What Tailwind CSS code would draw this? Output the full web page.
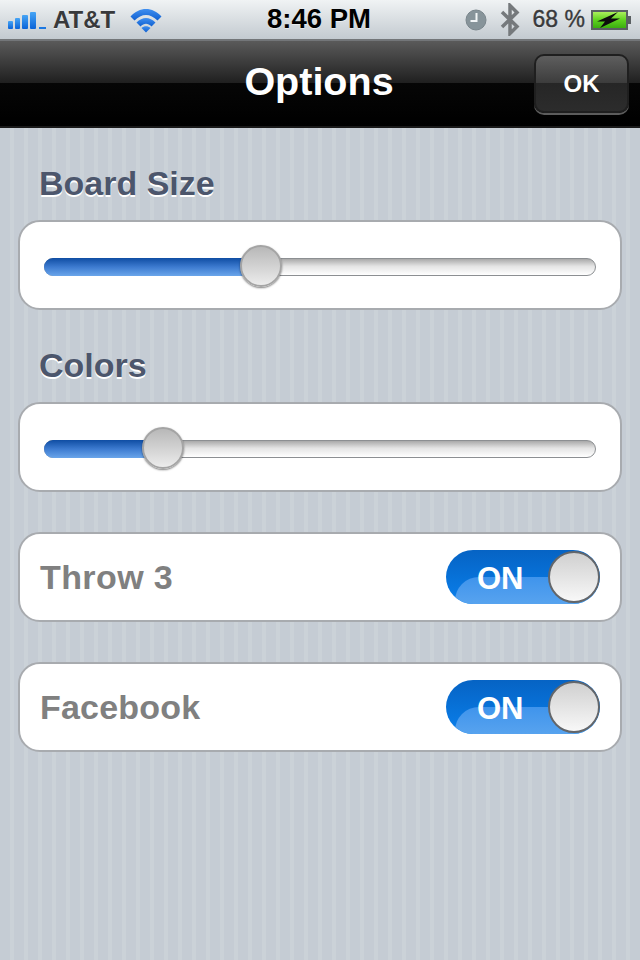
<!DOCTYPE html>
<html lang="en">

<head>
    <meta charset="UTF-8" />
    <title>Options</title>
    <script src="https://cdn.jsdelivr.net/npm/@tailwindcss/browser@4"></script>
</head>

<body class="w-[640px] h-[960px] overflow-hidden bg-[#c5ccd4] font-['Liberation_Sans',Arial,sans-serif]">

    <!-- status bar -->
    <div class="relative h-[39px] flex items-center pl-2 pr-2 bg-gradient-to-b from-[#f0f3f4] to-[#c3cad0] text-[#38393b] [text-shadow:0_1px_0_#ffffff99]">
        <svg width="38" height="18" viewBox="0 0 38 18" class="shrink-0">
            <defs>
                <linearGradient id="sig" x1="0" y1="0" x2="0" y2="1">
                    <stop offset="0" stop-color="#47a5f5" />
                    <stop offset="1" stop-color="#0a63d8" />
                </linearGradient>
            </defs>
            <rect x="0" y="10" width="5" height="8" rx="1" fill="url(#sig)" />
            <rect x="7" y="7" width="5" height="11" rx="1" fill="url(#sig)" />
            <rect x="14" y="4" width="6" height="14" rx="1" fill="url(#sig)" />
            <rect x="22" y="1" width="6" height="17" rx="1" fill="url(#sig)" />
            <rect x="31" y="16" width="7" height="2" fill="#1c78e2" />
        </svg>
        <span class="ml-[7px] text-[24px] font-bold leading-none">AT&amp;T</span>
        <svg width="32" height="26" viewBox="0 0 32 26" class="ml-[15px] shrink-0 mt-[1px]">
            <defs>
                <linearGradient id="wifi" x1="0" y1="0" x2="0" y2="1">
                    <stop offset="0" stop-color="#3f8ff0" />
                    <stop offset="1" stop-color="#0f5fd0" />
                </linearGradient>
            </defs>
            <path d="M.5 9.500C9.500 -.5 22.500 -.5 31.500 9.500L27.500 13.500C20.500 6 11.500 6 4.500 13.500Z" fill="url(#wifi)" />
            <path d="M6.500 15.500C12.500 9.500 19.500 9.500 25.500 15.500L21.500 19.500C18 15.700 14 15.700 10.500 19.500Z" fill="url(#wifi)" />
            <path d="M16 25.500L11.500 21C14 18.500 18 18.500 20.500 21Z" fill="url(#wifi)" />
        </svg>
        <span class="absolute left-[267px] top-[5px] text-[27.500px] font-bold leading-[28px] text-black [text-shadow:0_1px_0_#ffffff80]">8:46 PM</span>
        <div class="ml-auto flex items-center">
            <svg width="22" height="22" viewBox="0 0 22 22" class="shrink-0">
                <circle cx="11" cy="11" r="10" fill="#87949a" stroke="#7a868c" />
                <path d="M11.500 4V12H5.500" fill="none" stroke="#f2f5f6" stroke-width="2" />
            </svg>
            <svg width="20" height="33" viewBox="0 0 20 33" class="ml-[13px] shrink-0">
                <path d="M2 9L17 23.500L10 30.500V2.500L17 9.500L2 24" fill="none" stroke="#75797c" stroke-width="3.500" />
            </svg>
            <span class="ml-[13px] text-[23px] leading-none [-webkit-text-stroke:0.4px_#38393b]">68 %</span>
            <svg width="41" height="20" viewBox="0 0 41 20" class="ml-[6px] shrink-0">
                <defs>
                    <linearGradient id="bat" x1="0" y1="0" x2="0" y2="1">
                        <stop offset="0" stop-color="#b4f264" />
                        <stop offset=".5" stop-color="#5fd21e" />
                        <stop offset="1" stop-color="#36a80e" />
                    </linearGradient>
                </defs>
                <rect x="1" y="1" width="35" height="18" fill="url(#bat)" stroke="#5a5f62" stroke-width="2" />
                <rect x="36" y="6" width="4" height="8" fill="#5a5f62" />
                <path d="M27 2L6 11.500H14L9 18L29 8.500H20Z" fill="#0c0c0c" />
            </svg>
        </div>
    </div>

    <!-- nav bar -->
    <div class="relative h-[89px] flex items-center justify-center border-t-2 border-b-2 border-t-[#737679] border-b-[#1a1a1a] bg-[linear-gradient(#5a5a5a_0%,#202020_49%,#060606_50%,#000000_100%)]">
        <h1 class="mb-[4px] mr-[2px] text-[39.500px] leading-none font-bold text-white">Options</h1>
        <button class="absolute right-[11px] top-[13px] w-[95px] h-[59px] rounded-[10px] border-2 border-[#1f1f1f] bg-[linear-gradient(#5e5e5e_0%,#3c3c3c_49%,#262626_50%,#2c2c2c_100%)] shadow-[0_2px_0_#5c5c5c] text-[24px] font-bold text-white">OK</button>
    </div>

    <!-- content -->
    <div class="h-[832px] px-[18px] bg-[repeating-linear-gradient(90deg,#c5ccd4_0px,#c5ccd4_10px,#cbd2d8_10px,#cbd2d8_14px)]">
        <h2 class="pt-[35px] pl-[21px] h-[92px] text-[34px] leading-[40px] font-bold text-[#4c566c] [text-shadow:0_2px_0_#ffffff]">Board Size</h2>

        <div class="h-[90px] flex items-center pt-[4px] px-[24px] rounded-[22px] border-2 border-[#a8abaf] bg-white">
            <div class="relative w-full h-[18px] rounded-full border border-[#8c8f92] bg-[linear-gradient(#a9a9a9_0%,#e4e4e4_45%,#ffffff_100%)]">
                <div class="absolute -left-px -top-px w-[217px] h-[18px] rounded-l-full bg-[linear-gradient(#0f4da3_0%,#3d7bd0_50%,#6aa5ea_100%)]"></div>
                <div class="absolute left-[195px] top-[-14px] w-[42px] h-[42px] rounded-full border-2 border-[#a4a4a4] bg-gradient-to-b from-[#b8b8b8] to-[#ececec] shadow-[0_1px_2px_#00000080]"></div>
            </div>
        </div>

        <h2 class="pt-[35px] pl-[21px] h-[92px] text-[34px] leading-[40px] font-bold text-[#4c566c] [text-shadow:0_2px_0_#ffffff]">Colors</h2>

        <div class="h-[90px] flex items-center pt-[4px] px-[24px] rounded-[22px] border-2 border-[#a8abaf] bg-white">
            <div class="relative w-full h-[18px] rounded-full border border-[#8c8f92] bg-[linear-gradient(#a9a9a9_0%,#e4e4e4_45%,#ffffff_100%)]">
                <div class="absolute -left-px -top-px w-[119px] h-[18px] rounded-l-full bg-[linear-gradient(#0f4da3_0%,#3d7bd0_50%,#6aa5ea_100%)]"></div>
                <div class="absolute left-[97px] top-[-14px] w-[42px] h-[42px] rounded-full border-2 border-[#a4a4a4] bg-gradient-to-b from-[#b8b8b8] to-[#ececec] shadow-[0_1px_2px_#00000080]"></div>
            </div>
        </div>

        <div class="mt-[40px] h-[90px] flex items-center justify-between pl-[20px] pr-[20px] rounded-[22px] border-2 border-[#a8abaf] bg-white">
            <span class="text-[34px] font-bold tracking-[0.4px] text-[#808080]">Throw 3</span>
            <div class="relative w-[154px] h-[54px] overflow-hidden rounded-full bg-gradient-to-b from-[#0663c4] to-[#0a80ec]">
                <div class="absolute left-[9px] top-[27px] w-[140px] h-[40px] rounded-tl-[24px] bg-gradient-to-b from-[#3f94ec] to-[#62aaf0]"></div>
                <span class="absolute left-[31px] top-[11px] text-[31px] leading-[36px] font-bold text-white">ON</span>
                <div class="absolute right-0 top-[1px] w-[52px] h-[52px] rounded-full border-2 border-[#63666a] bg-gradient-to-b from-[#d0d0d0] to-[#f8f8f8]"></div>
            </div>
        </div>

        <div class="mt-[40px] h-[90px] flex items-center justify-between pl-[20px] pr-[20px] rounded-[22px] border-2 border-[#a8abaf] bg-white">
            <span class="text-[34px] font-bold tracking-[0.2px] text-[#808080]">Facebook</span>
            <div class="relative w-[154px] h-[54px] overflow-hidden rounded-full bg-gradient-to-b from-[#0663c4] to-[#0a80ec]">
                <div class="absolute left-[9px] top-[27px] w-[140px] h-[40px] rounded-tl-[24px] bg-gradient-to-b from-[#3f94ec] to-[#62aaf0]"></div>
                <span class="absolute left-[31px] top-[11px] text-[31px] leading-[36px] font-bold text-white">ON</span>
                <div class="absolute right-0 top-[1px] w-[52px] h-[52px] rounded-full border-2 border-[#63666a] bg-gradient-to-b from-[#d0d0d0] to-[#f8f8f8]"></div>
            </div>
        </div>
    </div>

</body>

</html>
